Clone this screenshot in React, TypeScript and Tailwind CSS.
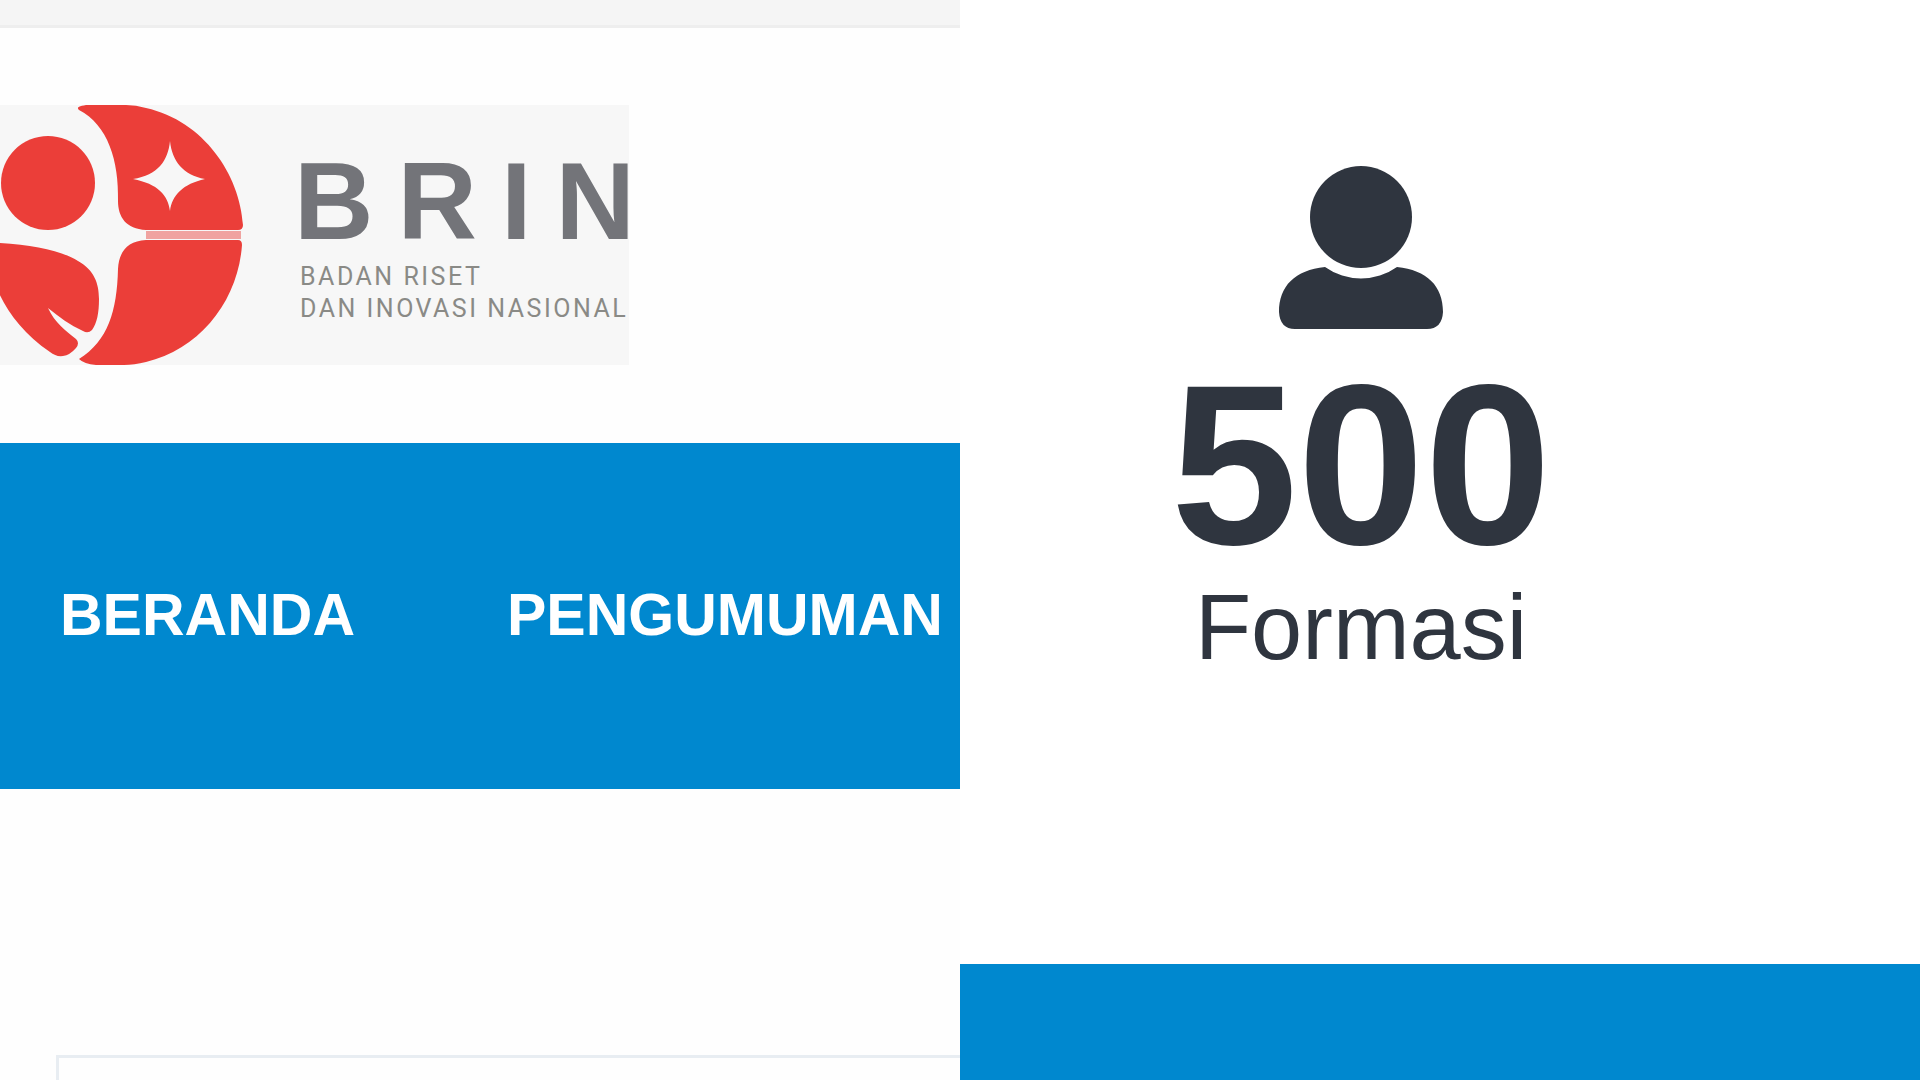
import React from 'react';

const NAV_ITEMS = [
  { label: 'BERANDA', href: '#beranda' },
  { label: 'PENGUMUMAN', href: '#pengumuman' },
];

function LogoMark() {
  return (
    <svg viewBox="0 0 260 260" className="h-[260px] w-[260px] shrink-0" aria-hidden="true">
      <g fill="#eb3e39">
        <circle cx="48" cy="78" r="47" />
        <path
          fillRule="evenodd"
          d="M79 5 C76 2 80 1 86 0 H126 Q136 0 146 3 C204 16 240 70 243 120 Q243 125 238 125 H146 C126 124 118 112 118 96 C119 56 108 20 79 5 Z
             M170 36 C172 56 183 70 205 74 C183 79 172 90 170 106 C168 90 158 79 133 74 C158 70 168 56 170 36 Z"
        />
        <path d="M146 135 H238 Q242 135 242 140 C238 196 200 244 146 257 Q134 260 124 260 H96 Q84 259 79 254 C108 236 117 206 118 164 C119 146 128 136 146 135 Z" />
        <path d="M-1 138 C34 140 62 146 78 156 C94 165 99 178 99 194 C99 208 97 218 92 225 Q88 229 83 226 C70 220 59 212 48 203 C55 218 65 225 76 234 Q80 238 76 243 Q70 250 63 251 Q56 252 50 247 C25 230 8 208 -1 188 Z" />
      </g>
      <path d="M146 130 H241" stroke="#f0a3a0" strokeWidth="8" />
    </svg>
  );
}

function Logo() {
  return (
    <a href="#beranda" className="flex w-[629px] overflow-hidden bg-[#f7f7f7]">
      <LogoMark />
      <span className="flex flex-col pt-11 pl-[34px] whitespace-nowrap">
        <span className="font-['Liberation_Sans',sans-serif] text-[110px] leading-[104px] font-bold tracking-[24px] text-[#737479]">
          BRIN
        </span>
        <span className="mt-2 pl-[6px] font-['Roboto',sans-serif] text-[25px] leading-8 tracking-widest text-[#8a8a86]">
          BADAN RISET
          <br />
          DAN INOVASI NASIONAL
        </span>
      </span>
    </a>
  );
}

function SiteHeader() {
  return (
    <section className="min-w-0 bg-[#fefefe]">
      <div className="h-7 border-b-[3px] border-[#eeeeee] bg-[#f5f5f5]" />
      <header className="pt-[77px] pb-[78px]">
        <Logo />
      </header>
      <nav className="flex h-[346px] items-center gap-[152px] bg-[#0088cf] px-[60px] pb-[2px] font-['Liberation_Sans',sans-serif] text-[59px] font-bold text-white">
        {NAV_ITEMS.map((item) => (
          <a key={item.label} href={item.href}>
            {item.label}
          </a>
        ))}
      </nav>
      <main className="pt-[266px] pl-[56px]">
        <div className="h-[300px] border-t-[3px] border-l-[3px] border-[#e8edf2]" />
      </main>
    </section>
  );
}

function UserIcon() {
  return (
    <svg viewBox="0 0 164 163" className="h-[163px] w-[164px]" fill="currentColor" aria-hidden="true">
      <circle cx="82" cy="51" r="51" />
      <path d="M46 101 A62 62 0 0 0 118 101 C148 104 164 120 164 146 Q163 163 148 163 H16 Q1 163 0 146 C0 120 16 104 46 101 Z" />
    </svg>
  );
}

function FormationCounter() {
  return (
    <section className="flex min-w-0 flex-col bg-white">
      <div className="flex flex-col items-center pt-[166px] pr-[158px] pb-[291px] font-['Liberation_Sans',sans-serif] text-[#2f353f]">
        <UserIcon />
        <strong className="mt-5 text-[228px] leading-[232px] font-bold">500</strong>
        <span className="text-[92px] leading-[92px]">Formasi</span>
      </div>
      <div className="grow bg-[#0088cf]" />
    </section>
  );
}

export default function App() {
  return (
    <div className="grid h-screen grid-cols-2 overflow-hidden">
      <SiteHeader />
      <FormationCounter />
    </div>
  );
}
